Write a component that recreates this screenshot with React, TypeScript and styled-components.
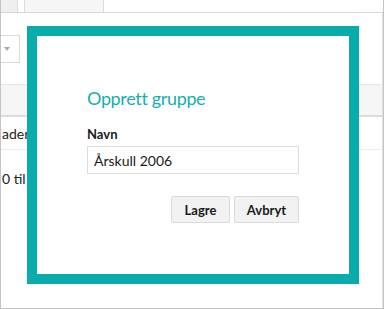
import React from "react";
import styled, { createGlobalStyle } from "styled-components";

const GlobalStyle = createGlobalStyle`
  html, body {
    margin: 0;
    padding: 0;
    background: #ffffff;
  }
  body {
    font-family: Lato, "Open Sans", sans-serif;
    color: #222;
  }
`;

const Frame = styled.div`
  position: relative;
  width: 384px;
  height: 309px;
  box-sizing: border-box;
  border: 1px solid #c4c4c4;
  border-top: none;
  overflow: hidden;
  background: #fff;
`;

// Background page (behind the dialog)
const TabBar = styled.div`
  display: flex;
  height: 12px;
  border-bottom: 1px solid #d8d8d8;
`;

const Tab = styled.div<{ $w: number; $active?: boolean }>`
  width: ${(p) => p.$w}px;
  background: ${(p) => (p.$active ? "#f6f6f6" : "#efefef")};
  border-right: 1px solid #dcdcdc;
  border-left: ${(p) => (p.$active ? "1px solid #dcdcdc" : "none")};
  margin-left: ${(p) => (p.$active ? "6px" : "0")};
`;

const Body = styled.div`
  border-right: 1px solid #e2e2e2;
  height: 296px;
`;

const Toolbar = styled.div`
  height: 71px;
  padding-top: 22px;
  box-sizing: border-box;
`;

const SelectBox = styled.div`
  width: 19px;
  height: 28px;
  box-sizing: border-box;
  border: 1px solid #dadada;
  border-left: none;
  display: flex;
  align-items: center;
  padding-left: 3px;
`;

const Caret = styled.div`
  width: 0;
  height: 0;
  border-left: 3px solid transparent;
  border-right: 3px solid transparent;
  border-top: 4px solid #a8a8a8;
`;

const HeadBand = styled.div`
  height: 33px;
  background: #f5f5f5;
  border-top: 1px solid #e6e6e6;
  border-bottom: 2px solid #dcdcdc;
  box-sizing: border-box;
`;

const Row = styled.div<{ $h: number; $line?: boolean }>`
  height: ${(p) => p.$h}px;
  display: flex;
  align-items: center;
  padding-left: 1px;
  font-size: 14px;
  color: #222;
  border-bottom: ${(p) => (p.$line ? "1px solid #ececec" : "none")};
  box-sizing: border-box;
  white-space: nowrap;
`;

// Dialog
const Dialog = styled.div`
  position: absolute;
  left: 26px;
  top: 26px;
  width: 332px;
  height: 258px;
  box-sizing: border-box;
  border: 10px solid #09acaa;
  background: #fff;
  padding: 51px 50px 0 50px;
`;

const Title = styled.h2`
  margin: 0;
  font-size: 18px;
  line-height: 22px;
  font-weight: 400;
  letter-spacing: -0.35px;
  color: #15b0ae;
`;

const Label = styled.label`
  display: block;
  margin-top: 17px;
  font-size: 13px;
  line-height: 16px;
  font-weight: 700;
  color: #1a1a1a;
`;

const Input = styled.input`
  display: block;
  margin-top: 4px;
  width: 212px;
  height: 28px;
  box-sizing: border-box;
  border: 1px solid #dcdcdc;
  padding: 0 6px;
  font-family: Lato, "Open Sans", sans-serif;
  font-size: 14px;
  color: #1a1a1a;
  outline: none;
`;

const Actions = styled.div`
  display: flex;
  justify-content: flex-end;
  gap: 4px;
  margin-top: 22px;
`;

const Button = styled.button<{ $w: number }>`
  width: ${(p) => p.$w}px;
  height: 27px;
  box-sizing: border-box;
  border: 1px solid #dadada;
  border-radius: 2px;
  background: #f2f2f2;
  font-family: Lato, "Open Sans", sans-serif;
  font-size: 13px;
  font-weight: 700;
  color: #1a1a1a;
  padding: 0;
`;

export default function App() {
  return (
    <>
      <GlobalStyle />
      <Frame>
        <TabBar>
          <Tab $w={16} />
          <Tab $w={78} $active />
        </TabBar>
        <Body>
          <Toolbar>
            <SelectBox>
              <Caret />
            </SelectBox>
          </Toolbar>
          <HeadBand />
          <Row $h={33} $line>
            ader
          </Row>
          <Row $h={56}>0 til (</Row>
        </Body>
        <Dialog>
          <Title>Opprett gruppe</Title>
          <Label htmlFor="navn">Navn</Label>
          <Input id="navn" defaultValue="Årskull 2006" />
          <Actions>
            <Button $w={59}>Lagre</Button>
            <Button $w={65}>Avbryt</Button>
          </Actions>
        </Dialog>
      </Frame>
    </>
  );
}
